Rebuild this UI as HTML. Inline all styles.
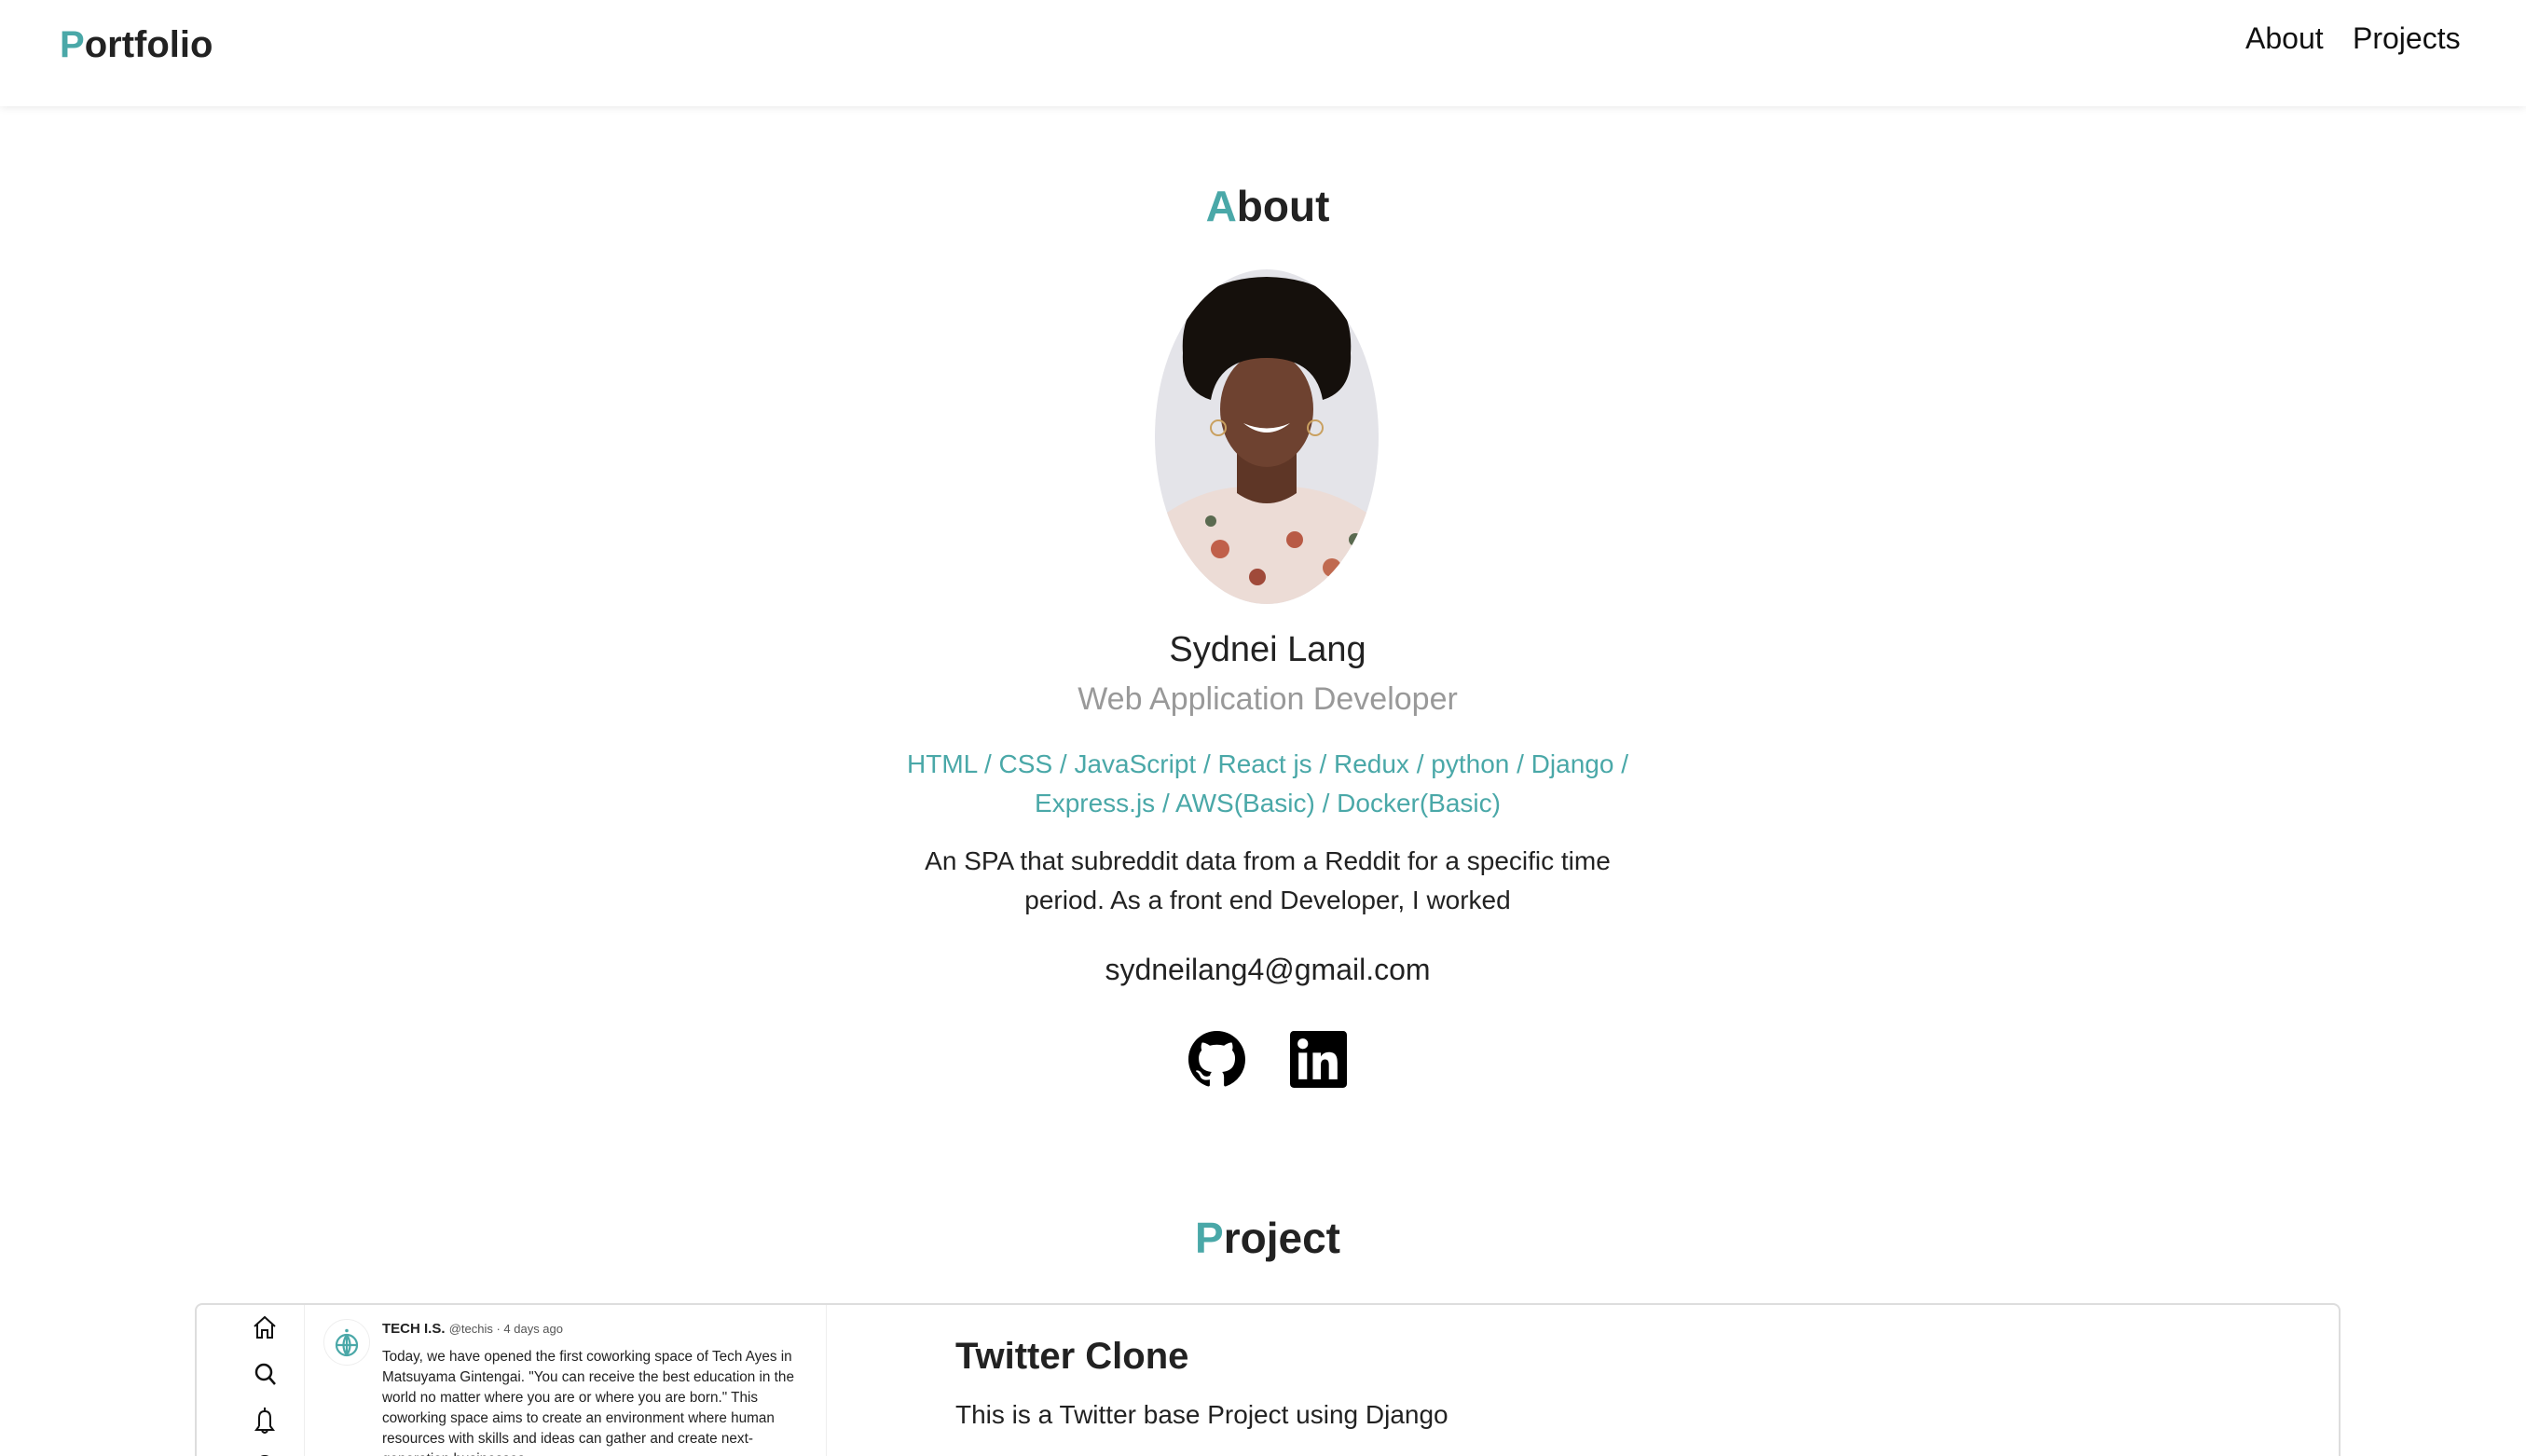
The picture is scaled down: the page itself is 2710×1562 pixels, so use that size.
<!DOCTYPE html>
<html style="width:2710px;height:1562px;overflow:hidden"><head><meta charset="utf-8">
<style>
*{margin:0;padding:0;box-sizing:border-box}
body{width:2710px;height:1562px;overflow:hidden;background:#fff;font-family:"Liberation Sans",Arial,sans-serif;color:#222;position:relative}
.abs{position:absolute}
.t{color:#4aa8a8}
header{position:absolute;left:0;top:0;width:2710px;height:114px;background:#fff;box-shadow:0 2px 8px rgba(0,0,0,0.08)}
.c{position:absolute;left:5px;width:2710px;text-align:center;white-space:nowrap}
</style></head><body>
<header>
<div class="abs" style="left:64px;top:26px;font-size:40px;font-weight:bold;color:#222"><span class="t">P</span>ortfolio</div>
<div class="abs" style="left:2409px;top:23px;font-size:32px;color:#111">About</div>
<div class="abs" style="left:2524px;top:23px;font-size:32px;color:#111">Projects</div>
</header>

<div class="c" style="top:194px;font-size:46px;font-weight:bold"><span class="t">A</span>bout</div>

<svg class="abs" style="left:1239px;top:289px" width="240" height="359" viewBox="0 0 240 359">
<defs><clipPath id="e"><ellipse cx="120" cy="179.5" rx="120" ry="179.5"/></clipPath></defs>
<g clip-path="url(#e)">
<rect width="240" height="359" fill="#e4e4e9"/>
<path d="M0 270 Q60 225 120 235 Q180 225 240 270 L240 359 L0 359Z" fill="#ecdcd6"/>
<circle cx="70" cy="300" r="10" fill="#c0604a"/><circle cx="150" cy="290" r="9" fill="#b85a45"/><circle cx="190" cy="320" r="10" fill="#c06a50"/><circle cx="110" cy="330" r="9" fill="#a04a3a"/><circle cx="40" cy="340" r="8" fill="#c07060"/><circle cx="215" cy="290" r="7" fill="#5a6a50"/><circle cx="60" cy="270" r="6" fill="#5a6a50"/>
<path d="M88 180 L88 240 Q120 262 152 240 L152 180Z" fill="#5e3626"/>
<ellipse cx="120" cy="150" rx="50" ry="62" fill="#6e4230"/>
<path d="M30 90 Q25 10 120 8 Q215 10 210 90 Q212 130 180 140 Q172 95 120 95 Q68 95 60 140 Q28 130 30 90Z" fill="#15100c"/>
<path d="M95 165 Q120 185 145 165 Q120 176 95 165Z" fill="#fff"/>
<circle cx="68" cy="170" r="8" fill="none" stroke="#c9a060" stroke-width="2"/><circle cx="172" cy="170" r="8" fill="none" stroke="#c9a060" stroke-width="2"/>
</g></svg>

<div class="c" style="top:676px;font-size:38px;color:#222">Sydnei Lang</div>
<div class="c" style="top:731px;font-size:34px;color:#999">Web Application Developer</div>
<div class="c t" style="top:799px;font-size:28px;line-height:42px">HTML / CSS / JavaScript / React js / Redux / python / Django /<br>Express.js / AWS(Basic) / Docker(Basic)</div>
<div class="c" style="top:903px;font-size:28px;line-height:42px;color:#222">An SPA that subreddit data from a Reddit for a specific time<br>period. As a front end Developer, I worked</div>
<div class="c" style="top:1022px;font-size:32px;color:#222">sydneilang4@gmail.com</div>

<svg class="abs" style="left:1275px;top:1106px" width="61" height="61" viewBox="0 0 16 16"><path fill="#000" d="M8 0C3.58 0 0 3.58 0 8c0 3.54 2.290 6.53 5.47 7.59.4.07.55-.17.55-.38 0-.19-.01-.82-.01-1.49-2.01.37-2.53-.49-2.69-.94-.09-.23-.48-.94-.82-1.130-.28-.15-.68-.52-.01-.53.63-.01 1.08.58 1.23.82.72 1.21 1.87.87 2.33.66.07-.52.28-.87.51-1.07-1.78-.2-3.64-.89-3.64-3.95 0-.87.31-1.590.82-2.15-.08-.2-.36-1.02.08-2.12 0 0 .67-.21 2.2.82.64-.18 1.32-.27 2-.27.68 0 1.36.09 2 .27 1.53-1.04 2.2-.82 2.2-.82.44 1.1.16 1.92.08 2.12.51.56.82 1.27.82 2.15 0 3.07-1.87 3.75-3.65 3.950.29.25.54.73.54 1.48 0 1.07-.01 1.93-.01 2.2 0 .21.15.46.55.38A8.013 8.013 0 0016 8c0-4.42-3.58-8-8-8z"/></svg>
<svg class="abs" style="left:1384px;top:1106px" width="61" height="61" viewBox="0 0 60 60"><rect width="60" height="60" rx="4" fill="#000"/><rect x="9" y="23" width="9" height="28" fill="#fff"/><circle cx="13.5" cy="13.5" r="5.5" fill="#fff"/><path d="M24 23h8.5v4c1.5-2.6 4.5-4.6 8.5-4.6 7 0 9 4.4 9 11V51h-9V36c0-3.500-.8-6-4-6-3.3 0-4.5 2.5-4.5 6V51H24Z" fill="#fff"/></svg>

<div class="c" style="top:1301px;font-size:46px;font-weight:bold"><span class="t">P</span>roject</div>

<div class="abs" style="left:209px;top:1398px;width:2302px;height:240px;border:2px solid #ddd;border-radius:8px"></div>
<div class="abs" style="left:211px;top:1400px;width:676px;height:162px;border-right:1px solid #eee"></div>
<div class="abs" style="left:326px;top:1400px;width:1px;height:162px;background:#eee"></div>
<svg class="abs" style="left:270px;top:1410px" width="28" height="160" viewBox="0 0 28 160" fill="none" stroke="#111" stroke-width="2">
<path d="M3 13 L14 3 L25 13 M6 11 V25 H11 V17 H17 V25 H22 V11"/>
<circle cx="13" cy="62" r="8" stroke-width="2.5"/><path d="M19 68 L25 75" stroke-width="2.5"/>
<path d="M14 100 V104 M8 120 V111 Q8 104 14 104 Q20 104 20 111 V120 L23 124 H5 L8 120 M11 125 Q14 129 17 125"/>
<circle cx="14" cy="160" r="8"/>
</svg>
<div class="abs" style="left:347px;top:1415px;width:50px;height:50px;border-radius:50%;border:1px solid #eee"></div>
<svg class="abs" style="left:358px;top:1425px" width="28" height="32" viewBox="0 0 28 32" fill="none" stroke="#4aa8a8" stroke-width="2.2"><circle cx="14" cy="2.5" r="1.8" fill="#4aa8a8" stroke="none"/><circle cx="14" cy="18" r="11"/><path d="M3 18 H25 M14 7 V29 M14 7 Q7 18 14 29 M14 7 Q21 18 14 29"/></svg>
<div class="abs" style="left:410px;top:1417px;font-size:15px;white-space:nowrap"><b>TECH I.S.</b> <span style="font-size:13px;color:#555">@techis · 4 days ago</span></div>
<div class="abs" style="left:410px;top:1445px;font-size:15.3px;line-height:22px;color:#222;width:462px">Today, we have opened the first coworking space of Tech Ayes in Matsuyama Gintengai. "You can receive the best education in the world no matter where you are or where you are born." This coworking space aims to create an environment where human resources with skills and ideas can gather and create next-generation businesses.</div>

<div class="abs" style="left:1025px;top:1433px;font-size:40px;font-weight:bold;color:#222">Twitter Clone</div>
<div class="abs" style="left:1025px;top:1502px;font-size:28px;color:#222">This is a Twitter base Project using Django</div>
</body></html>
